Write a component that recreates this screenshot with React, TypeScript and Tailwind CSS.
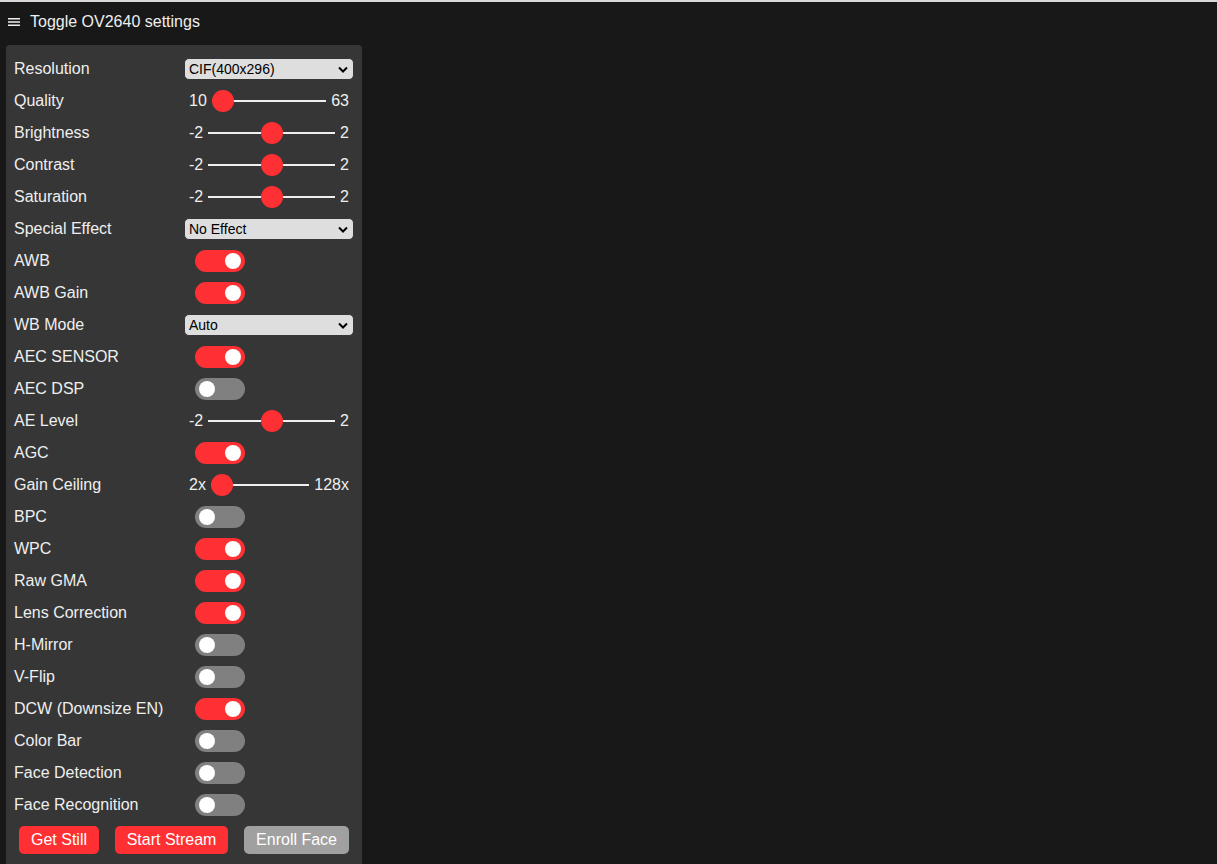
import React from 'react';

type Row =
  | { kind: 'select'; label: string; value: string }
  | { kind: 'range'; label: string; min: string; max: string; frac: number }
  | { kind: 'toggle'; label: string; on: boolean };

const rows: Row[] = [
  { kind: 'select', label: 'Resolution', value: 'CIF(400x296)' },
  { kind: 'range', label: 'Quality', min: '10', max: '63', frac: 0 },
  { kind: 'range', label: 'Brightness', min: '-2', max: '2', frac: 0.5 },
  { kind: 'range', label: 'Contrast', min: '-2', max: '2', frac: 0.5 },
  { kind: 'range', label: 'Saturation', min: '-2', max: '2', frac: 0.5 },
  { kind: 'select', label: 'Special Effect', value: 'No Effect' },
  { kind: 'toggle', label: 'AWB', on: true },
  { kind: 'toggle', label: 'AWB Gain', on: true },
  { kind: 'select', label: 'WB Mode', value: 'Auto' },
  { kind: 'toggle', label: 'AEC SENSOR', on: true },
  { kind: 'toggle', label: 'AEC DSP', on: false },
  { kind: 'range', label: 'AE Level', min: '-2', max: '2', frac: 0.5 },
  { kind: 'toggle', label: 'AGC', on: true },
  { kind: 'range', label: 'Gain Ceiling', min: '2x', max: '128x', frac: 0 },
  { kind: 'toggle', label: 'BPC', on: false },
  { kind: 'toggle', label: 'WPC', on: true },
  { kind: 'toggle', label: 'Raw GMA', on: true },
  { kind: 'toggle', label: 'Lens Correction', on: true },
  { kind: 'toggle', label: 'H-Mirror', on: false },
  { kind: 'toggle', label: 'V-Flip', on: false },
  { kind: 'toggle', label: 'DCW (Downsize EN)', on: true },
  { kind: 'toggle', label: 'Color Bar', on: false },
  { kind: 'toggle', label: 'Face Detection', on: false },
  { kind: 'toggle', label: 'Face Recognition', on: false },
];

function FakeSelect({ value }: { value: string }) {
  return (
    <div className="flex-1 h-[22px] border border-[#363636] rounded-[5px] bg-[#dedede] flex items-center pl-[4px] pr-[4px] text-[14px] text-black">
      <span className="flex-1 leading-none">{value}</span>
      <svg width="10" height="7" viewBox="0 0 10 7" className="mr-[1px]">
        <path d="M1 1.5 5 5.5 9 1.5" fill="none" stroke="#000" strokeWidth="2" />
      </svg>
    </div>
  );
}

function Range({ min, max, frac }: { min: string; max: string; frac: number }) {
  return (
    <div className="flex-1 flex items-center">
      <span className="px-[5px]">{min}</span>
      <div className="relative flex-1 h-[22px]">
        <div className="absolute left-0 right-0 top-[10px] h-[2px] bg-[#efefef]" />
        <div
          className="absolute top-0 w-[22px] h-[22px] rounded-full bg-[#ff3034]"
          style={{ left: `calc((100% - 22px) * ${frac})` }}
        />
      </div>
      <span className="px-[5px]">{max}</span>
    </div>
  );
}

function Toggle({ on }: { on: boolean }) {
  return (
    <div className={`relative ml-[11px] w-[50px] h-[22px] rounded-full ${on ? 'bg-[#ff3034]' : 'bg-[#808080]'}`}>
      <div className={`absolute top-[3px] w-4 h-4 rounded-full bg-white ${on ? 'left-[30px]' : 'left-[4px]'}`} />
    </div>
  );
}

export default function App() {
  return (
    <div className="min-h-screen bg-[#181818] text-[#efefef] text-[16px] font-['Liberation_Sans',Arial,sans-serif]">
      <div className="h-[2px] bg-[#d8d8d8]" />
      <div className="h-[40px] flex items-center pl-2 gap-[10px]">
        <svg width="12" height="8" viewBox="0 0 12 8">
          <rect x="0" y="0" width="12" height="1.5" fill="#efefef" />
          <rect x="0" y="3.25" width="12" height="1.5" fill="#efefef" />
          <rect x="0" y="6.5" width="12" height="1.5" fill="#efefef" />
        </svg>
        <span>Toggle OV2640 settings</span>
      </div>
      <div className="mt-[3px] ml-[6px] w-[356px] bg-[#363636] rounded-[4px] px-2 pt-[13px] pb-2">
        <div className="flex flex-col gap-[10px]">
          {rows.map((row) => (
            <div key={row.label} className="flex items-center h-[22px] leading-[22px]">
              <div className="w-[170px] shrink-0 pr-[10px]">{row.label}</div>
              {row.kind === 'select' && <FakeSelect value={row.value} />}
              {row.kind === 'range' && <Range min={row.min} max={row.max} frac={row.frac} />}
              {row.kind === 'toggle' && <Toggle on={row.on} />}
            </div>
          ))}
        </div>
        <div className="flex justify-between mt-[5px]">
          <button className="m-[5px] px-3 leading-[28px] rounded-[5px] bg-[#ff3034] text-white">Get Still</button>
          <button className="m-[5px] px-3 leading-[28px] rounded-[5px] bg-[#ff3034] text-white">Start Stream</button>
          <button className="m-[5px] px-3 leading-[28px] rounded-[5px] bg-[#a0a0a0] text-white">Enroll Face</button>
        </div>
      </div>
    </div>
  );
}
